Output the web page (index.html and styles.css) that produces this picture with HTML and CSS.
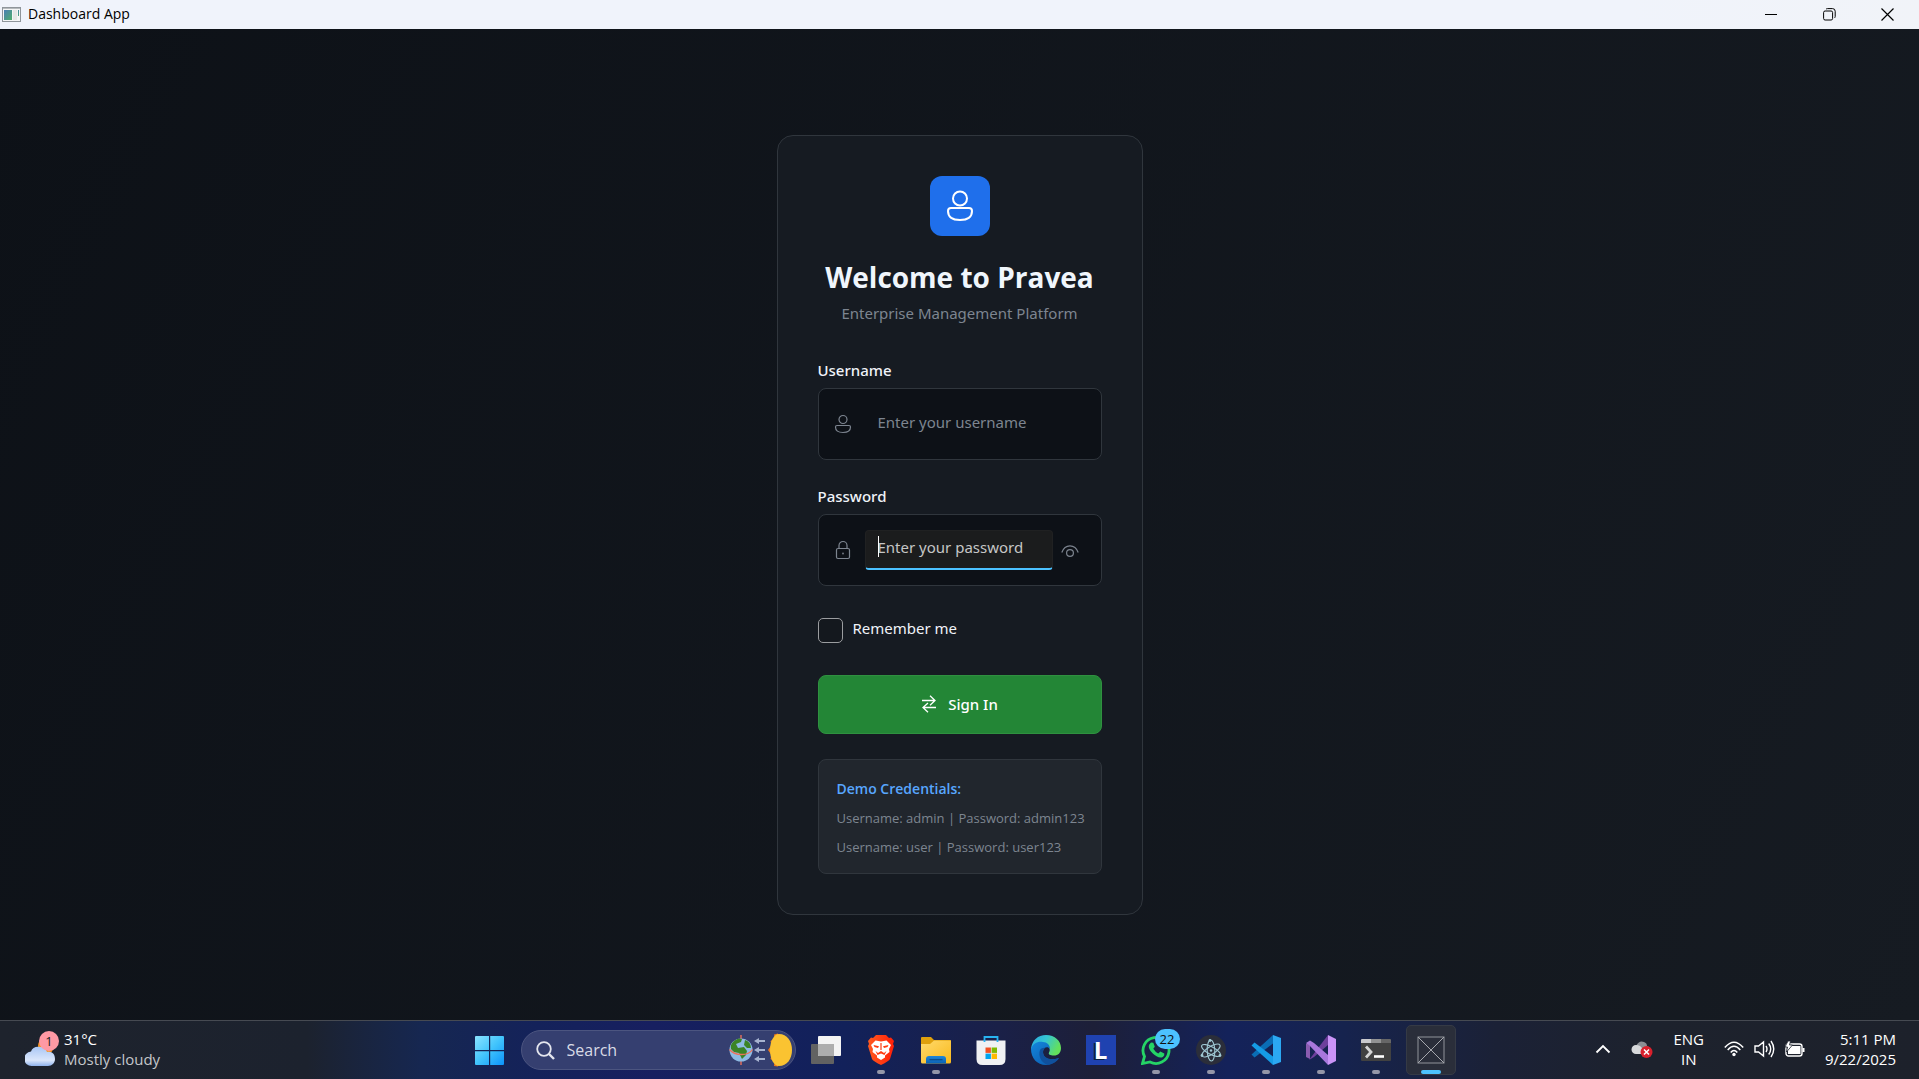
FILE: index.html
```html
<!DOCTYPE html>
<html lang="en">
<head>
<meta charset="utf-8">
<meta name="viewport" content="width=device-width, initial-scale=1">
<title>Dashboard App</title>
<link rel="stylesheet" href="styles.css">
</head>
<body>
<header class="titlebar">
  <div class="titlebar-name">
    <svg width="19" height="15" viewBox="0 0 19 15" aria-hidden="true">
      <defs><linearGradient id="win" x1="0" y1="0" x2="1" y2="1"><stop offset="0" stop-color="#4a7fb5"/><stop offset="1" stop-color="#4fae6c"/></linearGradient></defs>
      <rect x=".5" y=".5" width="18" height="14" fill="#f4f5f6" stroke="#8f959b"/>
      <path d="M1 1.5h17" stroke="#b5b9bd"/>
      <rect x="2" y="3" width="8" height="10" fill="url(#win)"/>
      <rect x="11" y="3" width="4" height="10" fill="#e4e7e6"/>
      <rect x="16" y="3" width="1" height="6" fill="url(#win)"/>
    </svg>
    <span>Dashboard App</span>
  </div>
  <div class="window-controls">
    <button type="button" aria-label="Minimize"><svg width="13" height="13" viewBox="0 0 13 13"><path d="M0 6.5h12" stroke="#000"/></svg></button>
    <button type="button" aria-label="Restore"><svg width="13" height="13" viewBox="0 0 13 13" fill="none" stroke="#000"><rect x=".6" y="3" width="9" height="9" rx="1.5"/><path d="M3 1.2Q3.600.600 4.500.600H9.500Q12.200.600 12.200 3.300V8.500q0 .8-.7 1.400"/></svg></button>
    <button type="button" aria-label="Close"><svg width="13" height="13" viewBox="0 0 13 13"><path d="M.5.5l12 12M12.500.500l-12 12" stroke="#000" stroke-width="1.200"/></svg></button>
  </div>
</header>

<main class="app">
  <form class="card">
    <div class="logo">
      <svg width="28" height="32" viewBox="0 0 28 32" fill="none" stroke="#fff" stroke-width="2"><circle cx="14" cy="8.500" r="7"/><path d="M5 18H23Q26 18 26 21Q26 30 14 30T2 21Q2 18 5 18Z"/></svg>
    </div>
    <h1 class="heading">Welcome to Pravea</h1>
    <p class="tagline">Enterprise Management Platform</p>

    <div class="field">
      <label for="username">Username</label>
      <div class="field-box">
        <svg class="field-icon" width="18" height="20" viewBox="0 0 18 20"><circle cx="9" cy="5.500" r="4"/><path d="M3 11.500H15Q16.500 11.500 16.500 13Q16.500 18.500 9 18.500T1.500 13Q1.500 11.500 3 11.500Z"/></svg>
        <div class="entry"><input id="username" type="text" placeholder="Enter your username"></div>
      </div>
    </div>

    <div class="field">
      <label for="password">Password</label>
      <div class="field-box">
        <svg class="field-icon" width="18" height="20" viewBox="0 0 18 20"><rect x="2.500" y="8.500" width="13" height="10" rx="1.500"/><path d="M5 8.500V5.500a4 4 0 0 1 8 0V8.500"/><circle cx="9" cy="13.500" r="1" fill="#6f767f" stroke="none"/></svg>
        <div class="entry entry-active"><input id="password" type="password" placeholder="Enter your password"></div>
        <button class="reveal" type="button" aria-label="Show password"><svg width="18" height="14" viewBox="0 0 18 14"><path d="M.8 9.500C2.500 4.800 5.500 2.800 9 2.800s6.500 2 8.200 6.700"/><circle cx="9" cy="10" r="3.400"/></svg></button>
      </div>
    </div>

    <label class="remember"><input type="checkbox"><span>Remember me</span></label>

    <button class="submit" type="submit">
      <svg width="16" height="18" viewBox="0 0 16 18" fill="none" stroke="#fff" stroke-width="1.300"><path d="M1 5.500H14M9 .8l5 4.700-5 4.700M15 12.500H2M7 8l-5 4.500 5 4.700"/></svg>
      <span>Sign In</span>
    </button>

    <section class="demo">
      <h2>Demo Credentials:</h2>
      <p>Username: admin | Password: admin123</p>
      <p>Username: user | Password: user123</p>
    </section>
  </form>
</main>

<footer class="taskbar">
  <button class="weather" type="button">
    <span class="weather-icon">
      <svg width="31" height="36" viewBox="0 0 31 36"><defs><linearGradient id="cloud" x1="0" y1="0" x2="0" y2="1"><stop offset="0" stop-color="#a9c6f5"/><stop offset=".7" stop-color="#dbe7fb"/><stop offset="1" stop-color="#8fb2ec"/></linearGradient></defs><circle cx="21" cy="15" r="8" fill="#f7931e"/><path d="M7 35a7 7 0 0 1-1-14.500C7 17 11 15 15 16c4 0 6 2 7 5 5-1 8 2 8 7 0 4-3 7-7 7Z" fill="url(#cloud)"/></svg>
      <span class="weather-badge">1</span>
    </span>
    <span class="weather-text"><span>31°C</span><span class="dim">Mostly cloudy</span></span>
  </button>

  <nav class="apps" aria-label="Taskbar apps">
    <button class="app-button start" type="button" aria-label="Start">
      <svg width="30" height="30" viewBox="0 0 30 30"><defs><linearGradient id="start" x1="0" y1="0" x2="1" y2="1"><stop offset="0" stop-color="#8be3ff"/><stop offset=".5" stop-color="#41c4fc"/><stop offset="1" stop-color="#0c93fb"/></linearGradient></defs><path d="M0 2q0-1 1-1H14V15H0ZM15.200 1H28q1 0 1 1V15H15.200ZM0 16.200H14V30H1q-1 0-1-1ZM15.200 16.200H29V29q0 1-1 1H15.200Z" fill="url(#start)"/></svg>
    </button>
    <div class="search">
      <svg width="19" height="19" viewBox="0 0 19 19" fill="none" stroke="#e4e6ee"><circle cx="8" cy="8" r="6.800" stroke-width="1.800"/><path d="M13 13l5 5" stroke-width="2.400"/></svg>
      <input type="search" placeholder="Search" aria-label="Search">
      <svg width="64" height="34" viewBox="0 0 64 34">
        <path d="M13 2v30" stroke="#e8705c" stroke-width="1.400"/><circle cx="13" cy="17" r="11.500" fill="#8ebbe4"/>
        <path d="M5 9q5-5 9-3l-1 3-5 2 2 4 6-1 3 4-1 4-4 4-3-6-5-1-3-3q-1-4 2-7ZM17 7q6 2 6 8l-4 0-3-3Z" fill="#3b8426"/>
        <path d="M1.500 16.500q4 5 12 5t11-5" fill="none" stroke="#ed735c" stroke-width="1.300"/>
        <path d="M26 8l5-3v2h6v2h-6v2ZM26 17l5-3v2h6v2h-6v2ZM26 26l5-3v2h6v2h-6v2Z" fill="#a7b3d0"/>
        <path d="M50 .5l-4 1 .5 4-4 2.500 1 4-3.500 5 3.500 5-1 4 4 2.500-.5 4.500 4 .5Z" fill="#ef7a1b"/><path d="M51 1c8 0 13 7 13 16s-5 16-13 16c-5 0-9-7-9-16s4-16 9-16Z" fill="#fac331"/>
      </svg>
    </div>
    <button class="app-button" type="button" aria-label="Task view">
      <svg width="30" height="30" viewBox="0 0 30 30"><rect y="9" width="23" height="20" rx="1" fill="#626262"/><rect x="7" y="1" width="23" height="20" rx="1" fill="#f3f3f3"/><path d="M7 9H23V21H8q-1 0-1-1Z" fill="#adadad"/></svg>
    </button>
    <button class="app-button running" type="button" aria-label="Brave">
      <svg width="30" height="30" viewBox="0 0 30 30"><defs><linearGradient id="brave"><stop offset="0" stop-color="#ff5a1f"/><stop offset="1" stop-color="#ff1f08"/></linearGradient></defs><path d="M10 0H20L23 3l2-.5L28 6l-1 3 1 2-4 13q-1 2-9 6-8-4-9-6L2 11l1-2-1-3 3-3.500L7 3Z" fill="url(#brave)"/><path d="M9.500 5.500 15 6.500l5.500-1L25 10l-2 4 .5 3-4.500 3.500v2L15 25l-4-2.500v-2L6.500 17 7 14l-2-4Z" fill="#fff"/><path d="M7.500 10l5.500 1.300-1 1.700-3.500-1ZM22.500 10l-5.500 1.300 1 1.700 3.500-1ZM14.400 8h1.200v7h-1.200ZM9.500 16l2.500 2 3-2 3 2 2.500-2-2 4-3.500-1.500-3.500 1.500Z" fill="#ff3b12"/></svg>
    </button>
    <button class="app-button running" type="button" aria-label="File Explorer">
      <svg width="30" height="30" viewBox="0 0 30 30"><defs><linearGradient id="folder" x1="0" y1="0" x2="1" y2="1"><stop offset="0" stop-color="#ffda6c"/><stop offset="1" stop-color="#f9b91c"/></linearGradient><linearGradient id="tray" x1="0" y1="0" x2="0" y2="1"><stop offset="0" stop-color="#1f86d8"/><stop offset="1" stop-color="#0a62b4"/></linearGradient></defs><path d="M0 3q0-1 1-1H10l3 3H29q1 0 1 1V16H0Z" fill="#dfa00c"/><path d="M0 9H9l4-3.500H30V27q0 1.500-1.500 1.500H1.500Q0 28.500 0 27Z" fill="url(#folder)"/><path d="M5 28.500V24q0-3 3-3H22q3 0 3 3v4.500Z" fill="url(#tray)"/><path d="M8.500 24.700H21.500" stroke="#0b4a8a" stroke-width="1.200"/></svg>
    </button>
    <button class="app-button" type="button" aria-label="Store">
      <svg width="30" height="30" viewBox="0 0 30 30"><path d="M.5 5.500h29V24q0 6-6 6h-17q-6 0-6-6Z" fill="#f0f1f3"/><path d="M8.500 7V2H21.500V7" fill="none" stroke="#28b3f1" stroke-width="1.800"/><path d="M9.500 12.500h5.400v5.400H9.500Z" fill="#f25022"/><path d="M15.600 12.500H21v5.400h-5.400Z" fill="#7fba00"/><path d="M9.500 18.600h5.400V24H9.500Z" fill="#00a4ef"/><path d="M15.600 18.600H21V24h-5.400Z" fill="#ffb900"/></svg>
    </button>
    <button class="app-button" type="button" aria-label="Edge">
      <svg width="30" height="30" viewBox="0 0 30 30"><defs><linearGradient id="edgeTop" x1="0" y1="0" x2="1" y2=".4"><stop offset="0" stop-color="#28a7e0"/><stop offset=".5" stop-color="#35c5d2"/><stop offset="1" stop-color="#63e05c"/></linearGradient><linearGradient id="edgeLow" x1="0" y1="0" x2="1" y2="1"><stop offset="0" stop-color="#1487dd"/><stop offset="1" stop-color="#0a55a8"/></linearGradient></defs><path d="M0 14C1 5 7 0 15 0c9 0 15 6 15 13 0 5-3 7.500-7 7.500-4 0-6-1-5-3 2-3 0-7-4-7Z" fill="url(#edgeTop)"/><path d="M0 14C2 8 7 6 12 7c4 0 7 3 7 7-2-3-7-2-7 3 0 6 6 9 16 6-3 4-8 7-13 7C6 30 0 23 0 14Z" fill="url(#edgeLow)"/><path d="M9 15c-2 6 1 13 8 14.800 5-.5 9-3.500 11-6.800-9 3-16 0-16-6 0-2 1-3.500 2-4.200-2-.2-4 .7-5 2.200Z" fill="#10509c"/></svg>
    </button>
    <button class="app-button" type="button" aria-label="L app"><span class="letter-icon">L</span></button>
    <button class="app-button running" type="button" aria-label="WhatsApp, 22 unread">
      <svg width="30" height="30" viewBox="0 0 30 30"><path d="M1.500 28.500 3.500 21.500A13 13 0 1 1 9 27Z" fill="none" stroke="#25d366" stroke-width="2.800"/><path d="M10 7.500l2.300.3 1.500 4-1.500 2q2 3.300 5 4.700l2-2 4 2q.5 2-1.500 3.500c-3 1.500-7-.5-10-3.500s-5-6.500-3.500-9Z" fill="#25d366"/></svg>
      <span class="badge">22</span>
    </button>
    <button class="app-button running" type="button" aria-label="Electron">
      <svg width="30" height="30" viewBox="0 0 30 30"><circle cx="15" cy="15" r="15" fill="#2b2e3a"/><g fill="none" stroke="#9fc8d3" stroke-width="1.100"><ellipse cx="15" cy="15.500" rx="10.500" ry="3.800" transform="rotate(28 15 15.500)"/><ellipse cx="15" cy="15.500" rx="10.500" ry="3.800" transform="rotate(88 15 15.500)"/><ellipse cx="15" cy="15.500" rx="10.500" ry="3.800" transform="rotate(148 15 15.500)"/></g><g fill="#9fc8d3"><circle cx="15" cy="15.500" r="1.200"/><circle cx="14" cy="5.500" r="1.400"/><circle cx="6" cy="20.500" r="1.400"/><circle cx="24" cy="20.500" r="1.400"/></g></svg>
    </button>
    <button class="app-button running" type="button" aria-label="VS Code">
      <svg width="30" height="30" viewBox="0 0 30 30"><path d="M22 0 30 3V27l-8 3Z" fill="#2ba8f2"/><path d="M.5 19.500 22 0V8.500L3.500 22.500Z" fill="#0a6db5"/><path d="M.5 10.500 3.500 7.500 22 21.500V30Z" fill="#159be5"/></svg>
    </button>
    <button class="app-button running" type="button" aria-label="Visual Studio">
      <svg width="30" height="30" viewBox="0 0 30 30"><path d="M0 9 4 6V24L0 22Z" fill="#8a5cb0"/><path d="M3 25 22 0V10L8 22Z" fill="#6d3f9b"/><path d="M0 8 4 5.500 8 8 22 20V30L3 10Z" fill="#a877dc"/><path d="M22 0 30 4V26l-8 4Z" fill="#ca94f7"/></svg>
    </button>
    <button class="app-button running" type="button" aria-label="Terminal">
      <svg width="30" height="30" viewBox="0 0 30 30"><path d="M0 8H30V25q0 1-1 1H1q-1 0-1-1Z" fill="#414141"/><path d="M0 8V5q0-1 1-1H10V8Z" fill="#c9c9cc"/><path d="M10 4H20V8H10Z" fill="#929292"/><path d="M20 4h9q1 0 1 1V8H20Z" fill="#666"/><path d="M5 11.500 10 17l-5 5.500" fill="none" stroke="#d5d5d5" stroke-width="2.800"/><path d="M13 21.500H23" stroke="#fff" stroke-width="2.600"/></svg>
    </button>
    <button class="app-button running current" type="button" aria-label="Dashboard App">
      <svg width="28" height="28" viewBox="0 0 28 28" fill="none" stroke="#90939a"><rect x="1" y="1" width="26" height="26"/><path d="M1 1l26 26M27 1 1 27" stroke="#a6a8ae"/></svg>
    </button>
  </nav>

  <div class="tray">
    <button type="button" aria-label="Show hidden icons"><svg width="16" height="10" viewBox="0 0 16 10"><path d="M1.500 8.500 8 2l6.500 6.500" fill="none" stroke="#fff" stroke-width="1.800"/></svg></button>
    <button type="button" aria-label="OneDrive error"><svg width="22" height="18" viewBox="0 0 22 18"><path d="M4 13a4 4 0 0 1 1-7q3-6 8-4 3 1 3 4 3 1 3 4v3Z" fill="#8b8f94"/><path d="M5 14a4.500 4.500 0 0 1 0-9q4 0 6 3l5 6Z" fill="#d7d9db"/><circle cx="15.500" cy="12" r="6" fill="#d9202c"/><path d="M13 9.500l5 5M18 9.500l-5 5" stroke="#fff" stroke-width="1.500"/></svg></button>
    <button class="language" type="button"><span>ENG</span><span>IN</span></button>
    <button class="status" type="button" aria-label="Network, volume and battery">
      <svg width="20" height="16" viewBox="0 0 20 16" fill="none" stroke="#fff" stroke-width="1.500"><path d="M.8 6.500Q10-4.200 19.200 6.500M3.700 9Q10 1.700 16.300 9M6.700 11.500Q10 7.700 13.300 11.500"/><circle cx="10" cy="13.500" r="1.700" fill="#fff" stroke="none"/></svg>
      <svg width="21" height="18" viewBox="0 0 21 18" fill="none" stroke="#fff" stroke-width="1.400"><path d="M1 6H4.500L9.500 2V16L4.500 12H1ZM12 6q2 3 0 6M14.700 3.500q4 5.500 0 11M17 1q5.500 8 0 16"/></svg>
      <svg width="20" height="17" viewBox="0 0 20 17"><rect x="1" y="3" width="16" height="12" rx="2.500" fill="none" stroke="#fff" stroke-width="1.400"/><path d="M3 5H15.500V13H3ZM17.500 7h2v4h-2Z" fill="#fff"/><path d="M3 0 0 6H2.500L1.500 11 7.500 4H4.500L5.500 0Z" fill="#fff" stroke="#1e232d" stroke-width=".8"/></svg>
    </button>
    <button class="clock" type="button"><span>5:11 PM</span><span>9/22/2025</span></button>
  </div>
</footer>
</body>
</html>
```
FILE: styles.css
```css
* { box-sizing: border-box; }

body {
  margin: 0;
  min-height: 100vh;
  display: flex;
  flex-direction: column;
  background: #0d1117;
  color: #f0f3f9;
  font-family: "Open Sans", "Noto Sans", sans-serif;
  font-size: 15px;
  line-height: 20px;
}

button, input { font: inherit; color: inherit; }

button {
  padding: 0;
  border: 0;
  background: none;
}

svg { display: block; flex: none; }
h1, h2, p { margin: 0; }

/* Window title bar */
.titlebar {
  display: flex;
  justify-content: space-between;
  height: 29px;
  padding: 0 3px 1px 2px;
  background: linear-gradient(90deg, #f0f3fb 85%, #f1f3f8);
  color: #000;
  font-size: 14px;
}

.titlebar-name {
  display: flex;
  align-items: center;
  gap: 7px;
}

.window-controls { display: flex; }

.window-controls button {
  width: 58px;
  display: grid;
  place-items: center;
}

/* Sign-in screen */
.app {
  flex: 1;
  display: grid;
  place-items: center;
  padding: 24px;
  background: linear-gradient(117deg, #0d1117, #161b22);
}

.card {
  width: 100%;
  max-width: 366px;
  display: flex;
  flex-direction: column;
  padding: 40px;
  border: 1px solid #30363d;
  border-radius: 16px;
  background: #161b22;
  font-family: "Noto Sans", "Open Sans", sans-serif;
}

.logo {
  align-self: center;
  display: grid;
  place-items: center;
  width: 60px;
  height: 60px;
  margin-bottom: 23px;
  border-radius: 12px;
  background: #1f6feb;
}

.heading {
  font-family: "Open Sans", "Noto Sans", sans-serif;
  font-size: 28px;
  line-height: 36px;
  font-weight: 700;
  text-align: center;
  white-space: nowrap;
  color: #f0f6fc;
}

.tagline {
  margin-top: 8px;
  margin-bottom: 36px;
  text-align: center;
  color: #7d8590;
  white-space: nowrap;
}

.field { margin-bottom: 25px; }

.field label {
  display: block;
  margin-bottom: 7px;
  font-weight: 500;
  line-height: 22px;
}

.field-box {
  display: flex;
  align-items: center;
  gap: 13px;
  height: 72px;
  padding: 0 15px;
  border: 1px solid #30363d;
  border-radius: 8px;
  background: #0d1117;
}

.field-icon, .reveal svg {
  fill: none;
  stroke: #7d8590;
  stroke-width: 1.2;
}

.entry {
  position: relative;
  width: 188px;
  height: 40px;
}

.entry input {
  width: 100%;
  height: 100%;
  padding: 0 12px 4px;
  border: 1px solid transparent;
  border-radius: 4px;
  outline: 0;
  background: transparent;
}

.entry input::placeholder { color: #7d8590; opacity: 1; }

.entry-active input {
  border: 1px solid #202122;
  border-bottom: 2px solid #4cc2ff;
  background: #1b1c1d;
}

.entry-active input::placeholder { color: #c6c6c6; }

.entry-active::before {
  content: "";
  position: absolute;
  left: 13px;
  top: 6px;
  width: 1px;
  height: 21px;
  background: #fff;
}

.reveal { margin-left: -5px; }

.remember {
  display: flex;
  gap: 10px;
  margin: 7px 0 32px;
}

.remember input {
  appearance: none;
  width: 25px;
  height: 25px;
  margin: 0;
  border: 1px solid #9b9da0;
  border-radius: 5px;
  background: #14181e;
}

.submit {
  display: flex;
  align-items: center;
  justify-content: center;
  gap: 11px;
  height: 59px;
  border: 1px solid #2f9140;
  border-radius: 8px;
  background: #238636;
  color: #fff;
  font-weight: 500;
}

.demo {
  margin-top: 25px;
  padding: 19px 18px 16px;
  border: 1px solid #30363d;
  border-radius: 8px;
  background: #21262d;
  color: #7d8590;
  font-family: "Open Sans", "Noto Sans", sans-serif;
  font-size: 13px;
  white-space: nowrap;
}

.demo h2 {
  color: #58a6ff;
  font-size: 14px;
  font-weight: 600;
}

.demo p { margin-top: 9px; }

/* Taskbar */
.taskbar {
  display: grid;
  grid-template-columns: 1fr auto 1fr;
  align-items: center;
  height: 59px;
  border-top: 1px solid #464a52;
  background: linear-gradient(90deg, #1e232d 0, #1c222e 16%, #162751 22%, #14225a 28%, #171f60 34%, #12215a 44%, #1a2048 52%, #1d1f38 57%, #14225a 64%, #16234e 70%, #1b2136 78%, #1d222d 86%, #1d212b);
  color: #fff;
}

.weather {
  justify-self: start;
  display: flex;
  align-items: center;
  gap: 8px;
  padding: 0 0 3px 25px;
  text-align: left;
}

.weather-icon { position: relative; }

.weather-badge {
  position: absolute;
  top: 0;
  left: 14px;
  width: 20px;
  height: 20px;
  border-radius: 50%;
  background: #ff99a4;
  color: #222;
  font-size: 13px;
  text-align: center;
}

.weather-text, .language, .clock {
  display: flex;
  flex-direction: column;
}

.dim { color: #c4c6ca; }

.apps { display: flex; align-items: center; gap: 5px; }

.app-button {
  position: relative;
  display: grid;
  place-items: center;
  width: 50px;
  height: 50px;
  border-radius: 5px;
}

.start { width: 52px; }

.running::after {
  content: "";
  position: absolute;
  bottom: 1px;
  left: 21px;
  width: 8px;
  height: 4px;
  border-radius: 2px;
  background: #9496a8;
}

.current {
  border: 1px solid #353a45;
  background: #2a2e3a;
}

.current::after {
  bottom: 0;
  left: 14px;
  width: 20px;
  background: #4cc2ff;
}

.badge {
  position: absolute;
  top: 4px;
  right: 1px;
  width: 25px;
  border-radius: 10px;
  background: #4cc2ff;
  color: #111;
  font-size: 13px;
}

.letter-icon {
  width: 30px;
  height: 30px;
  background: #1f42b0;
  color: #fff;
  font-size: 24px;
  font-weight: 700;
  line-height: 29px;
  text-shadow: -2px 1px #0b2340;
}

.search {
  display: flex;
  align-items: center;
  gap: 12px;
  width: 275px;
  height: 40px;
  padding: 0 3px 0 14px;
  border: 1px solid #4c5580;
  border-radius: 20px;
  background: #353f70;
}

.search input {
  flex: 1;
  min-width: 0;
  padding: 0;
  border: 0;
  outline: 0;
  background: transparent;
  font-size: 16px;
}

.search input::placeholder { color: #d9dbe6; opacity: 1; }

.tray {
  justify-self: end;
  display: flex;
  align-items: center;
  gap: 20px;
  padding: 0 23px 2px 0;
}

.language { align-items: center; }
.status { display: flex; align-items: center; gap: 10px; }
.clock { align-items: flex-end; }
```
